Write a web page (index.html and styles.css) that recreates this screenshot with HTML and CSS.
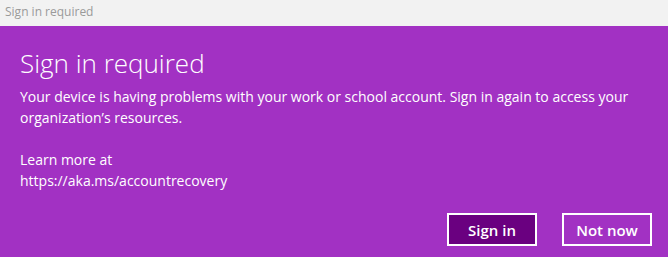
FILE: index.html
```html
<!DOCTYPE html>
<html lang="en">

<head>
    <meta charset="UTF-8">
    <title>Sign in required</title>
    <link rel="stylesheet" href="styles.css">
</head>

<body>
    <div class="title-bar">Sign in required</div>

    <div class="dialog">
        <h1 class="dialog-title">Sign in required</h1>
        <p class="dialog-text">Your device is having problems with your work or school account. Sign in again to access your organization’s resources.</p>
        <p class="dialog-text learn-more">Learn more at<br>https://aka.ms/accountrecovery</p>

        <div class="actions">
            <button class="btn btn-primary">Sign in</button>
            <button class="btn">Not now</button>
        </div>
    </div>
</body>

</html>
```
FILE: styles.css
```css
html,
body {
    margin: 0;
    height: 100%;
}

body {
    display: flex;
    flex-direction: column;
    font-family: "Open Sans", "Noto Sans", sans-serif;
    background-color: #a231c3;
}

.title-bar {
    height: 26px;
    line-height: 24px;
    padding-left: 5px;
    background-color: #f2f2f2;
    color: #9a9a9a;
    font-size: 12px;
}

.dialog {
    flex: 1;
    display: flex;
    flex-direction: column;
    padding: 21px 16px 11px 20px;
    color: #ffffff;
}

.dialog-title {
    margin: 0 0 7px 0;
    font-size: 26px;
    font-weight: 300;
    line-height: 32px;
}

.dialog-text {
    margin: 0;
    font-size: 14px;
    line-height: 21px;
}

.learn-more {
    margin-top: 21px;
}

.actions {
    margin-top: auto;
    display: flex;
    justify-content: flex-end;
    gap: 25px;
}

.btn {
    width: 90px;
    height: 33px;
    border: 2px solid #ffffff;
    background-color: transparent;
    color: #ffffff;
    font-family: inherit;
    font-size: 15px;
    font-weight: 600;
}

.btn-primary {
    background-color: #6a0080;
}
```
